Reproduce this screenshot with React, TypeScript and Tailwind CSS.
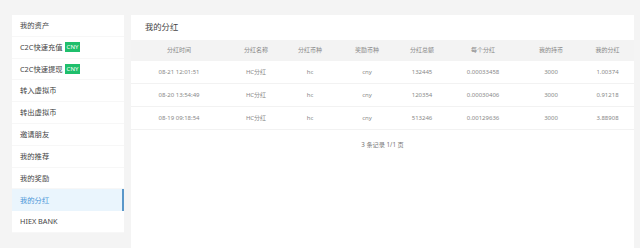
import React from "react";

const menu = [
    { label: "我的资产" },
    { label: "C2C快速充值", badge: "CNY" },
    { label: "C2C快速提现", badge: "CNY" },
    { label: "转入虚拟币" },
    { label: "转出虚拟币" },
    { label: "邀请朋友" },
    { label: "我的推荐" },
    { label: "我的奖励" },
    { label: "我的分红", active: true },
    { label: "HIEX BANK" },
];

const cols = [
    { title: "分红时间", w: "w-[96px]" },
    { title: "分红名称", w: "w-[58px]" },
    { title: "分红币种", w: "w-[50px]" },
    { title: "奖励币种", w: "w-[64px]" },
    { title: "分红总额", w: "w-[46px]" },
    { title: "每个分红", w: "w-[76px]" },
    { title: "我的持币", w: "w-[60px]" },
    { title: "我的分红", w: "w-[53px]" },
];

const rows = [
    ["08-21 12:01:51", "HC分红", "hc", "cny", "132445", "0.00033458", "3000", "1.00374"],
    ["08-20 13:54:49", "HC分红", "hc", "cny", "120354", "0.00030406", "3000", "0.91218"],
    ["08-19 09:18:54", "HC分红", "hc", "cny", "513246", "0.00129636", "3000", "3.88908"],
];

export default function App() {
    return (
        <div
            className="w-[640px] h-[248px] overflow-hidden bg-[#f4f4f4] flex gap-[7px] pl-[12px] pt-[15px]"
            style={{ fontFamily: '"Noto Sans", "Noto Sans CJK SC", sans-serif' }}
        >
            {/* Sidebar */}
            <div className="w-[112px] h-[218px] bg-white flex flex-col shrink-0">
                {menu.map((m, i) => (
                    <div
                        key={i}
                        className={
                            m.active
                                ? "h-[21.8px] flex items-center pl-[8px] text-[7.3px] text-[#4a95d8] bg-[#eaf5fd] border-r-[2px] border-[#5a97c9]"
                                : "h-[21.8px] flex items-center pl-[8px] text-[7.3px] text-[#444] border-b border-[#f7f7f7]"
                        }
                    >
                        <span>{m.label}</span>
                        {m.badge && (
                            <span className="ml-[2px] bg-[#1fbf6c] text-white text-[6px] leading-none px-[2px] py-[2px]">
                                {m.badge}
                            </span>
                        )}
                    </div>
                ))}
            </div>

            {/* Main */}
            <div className="w-[503px] h-[260px] bg-white flex flex-col shrink-0">
                <div className="h-[25px] flex items-center pl-[14px] text-[8.3px] text-[#444]">我的分红</div>
                <div className="flex h-[21px] items-center bg-[#f3f3f3] text-[6px] text-[#888]">
                    {cols.map((c, i) => (
                        <div key={i} className={`${c.w} text-center`}>{c.title}</div>
                    ))}
                </div>
                {rows.map((r, ri) => (
                    <div key={ri} className="flex h-[23px] items-center border-b border-[#f2f2f2] text-[6px] text-[#888]">
                        {r.map((v, ci) => (
                            <div key={ci} className={`${cols[ci].w} text-center`}>{v}</div>
                        ))}
                    </div>
                ))}
                <div className="h-[30px] flex items-center justify-center text-[6.2px] text-[#777]">3 条记录 1/1 页</div>
            </div>
        </div>
    );
}
